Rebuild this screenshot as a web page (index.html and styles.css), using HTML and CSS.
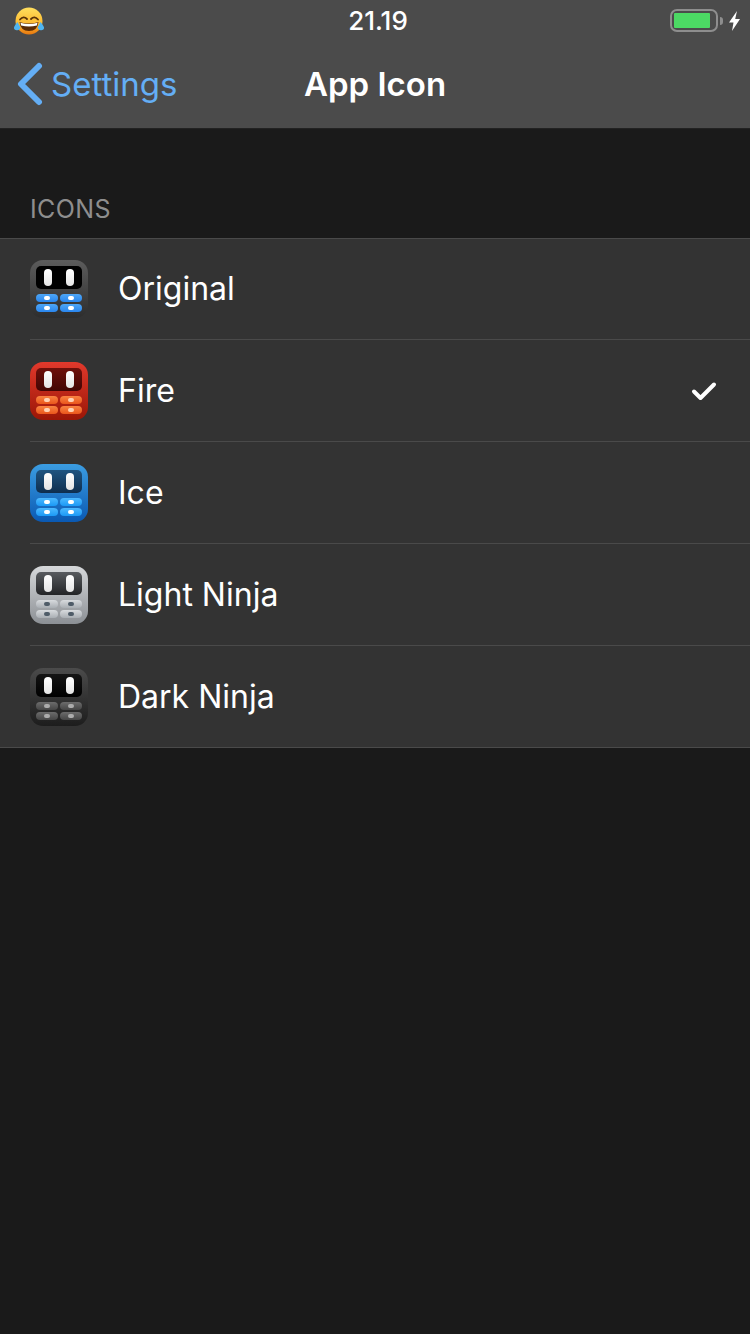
FILE: index.html
```html
<!DOCTYPE html>
<html lang="en">
<head>
  <meta charset="UTF-8" />
  <meta name="viewport" content="width=device-width, initial-scale=1.0" />
  <title>App Icon</title>
  <link rel="stylesheet" href="styles.css">
</head>
<body>
  <header class="topBar">
    <div class="statusBar">
      <svg class="emoji" width="32" height="30" viewBox="0 0 32 30">
        <defs>
          <linearGradient id="emojiFace" x1="0" y1="0" x2="0" y2="1">
            <stop offset="0" stop-color="#ffdf5e" />
            <stop offset="0.6" stop-color="#fdb92f" />
            <stop offset="1" stop-color="#e8780f" />
          </linearGradient>
        </defs>
        <circle cx="16" cy="15" r="13.5" fill="url(#emojiFace)" />
        <path d="M7 13.5q3.5-4 7 -0.5M18 13q3.5-3.500 7 .5" fill="none" stroke="#5a3208" stroke-width="1.800" stroke-linecap="round" />
        <path d="M6.500 16q9.500 3 19 0q-1 9-9.500 9t-9.500-9z" fill="#5b2c06" />
        <path d="M7.500 16.800q8.500 2.400 17 0l-.6 2.600q-7.900 2-15.800 0z" fill="#fff" />
        <path d="M4.500 16q-4 4.500-3.500 6.500t3.300 1.700t3-3z" fill="#4fb4f0" />
        <path d="M27.500 16q4 4.500 3.500 6.500t-3.300 1.700t-3-3z" fill="#4fb4f0" />
      </svg>
      <span class="clock">21.19</span>
      <div class="power">
        <div class="battery"><div class="batteryLevel"></div></div>
        <div class="batteryNub"></div>
        <svg class="bolt" width="11" height="20" viewBox="0 0 11 20">
          <path d="M8 0L0 11.500H4.500L3 20L11 8H6.200z" fill="#fff" />
        </svg>
      </div>
    </div>
    <nav class="navBar">
      <a class="backLink">
        <svg class="chevron" width="26" height="44" viewBox="0 0 26 44">
          <path d="M22 4L4 22L22 40" fill="none" stroke="#64aef5" stroke-width="6" stroke-linecap="round" stroke-linejoin="round" />
        </svg>
        <span>Settings</span>
      </a>
      <h1 class="navTitle">App Icon</h1>
    </nav>
  </header>

  <h2 class="sectionTitle">ICONS</h2>

  <ul class="iconList">
    <li class="iconRow">
      <div class="appIcon original">
        <div class="face"><span class="eye"></span><span class="eye"></span></div>
        <div class="keys">
          <span class="key"></span><span class="key"></span>
          <span class="key"></span><span class="key"></span>
        </div>
      </div>
      <span class="rowLabel">Original</span>
    </li>
    <li class="iconRow">
      <div class="appIcon fire">
        <div class="face"><span class="eye"></span><span class="eye"></span></div>
        <div class="keys">
          <span class="key"></span><span class="key"></span>
          <span class="key"></span><span class="key"></span>
        </div>
      </div>
      <span class="rowLabel">Fire</span>
      <svg class="check" width="26" height="20" viewBox="0 0 26 20">
        <path d="M3 10.500L9.500 17L23 3.500" fill="none" stroke="#fff" stroke-width="4" stroke-linecap="round" stroke-linejoin="round" />
      </svg>
    </li>
    <li class="iconRow">
      <div class="appIcon ice">
        <div class="face"><span class="eye"></span><span class="eye"></span></div>
        <div class="keys">
          <span class="key"></span><span class="key"></span>
          <span class="key"></span><span class="key"></span>
        </div>
      </div>
      <span class="rowLabel">Ice</span>
    </li>
    <li class="iconRow">
      <div class="appIcon light">
        <div class="face"><span class="eye"></span><span class="eye"></span></div>
        <div class="keys">
          <span class="key"></span><span class="key"></span>
          <span class="key"></span><span class="key"></span>
        </div>
      </div>
      <span class="rowLabel">Light Ninja</span>
    </li>
    <li class="iconRow">
      <div class="appIcon dark">
        <div class="face"><span class="eye"></span><span class="eye"></span></div>
        <div class="keys">
          <span class="key"></span><span class="key"></span>
          <span class="key"></span><span class="key"></span>
        </div>
      </div>
      <span class="rowLabel">Dark Ninja</span>
    </li>
  </ul>
</body>
</html>
```

FILE: styles.css
```css
html, body {
  margin: 0;
  padding: 0;
}

body {
  width: 750px;
  min-height: 1334px;
  background-color: #1a1a1a;
  color: #fff;
  font-family: Inter, 'Noto Sans', sans-serif;
}

/* top bar */
.topBar {
  height: 129px;
  box-sizing: border-box;
  background-color: #4b4b4b;
  border-bottom: 1px solid #222;
}

.statusBar {
  height: 40px;
  display: grid;
  grid-template-columns: 1fr auto 1fr;
  align-items: center;
  padding: 0 10px 0 13px;
}

.emoji {
  display: block;
  margin-top: 1px;
}

.clock {
  font-size: 26px;
  font-weight: 500;
  padding-left: 3px;
}

.power {
  display: flex;
  align-items: center;
  justify-content: flex-end;
  margin-top: 1px;
}

.battery {
  width: 48px;
  height: 23px;
  box-sizing: border-box;
  border: 2px solid #8e8e8e;
  border-radius: 7px;
  padding: 2px;
}

.batteryLevel {
  width: 36px;
  height: 15px;
  background-color: #4cd964;
  border-radius: 1px;
}

.batteryNub {
  width: 3px;
  height: 8px;
  margin: 0 6px 0 2px;
  background-color: #8e8e8e;
  border-radius: 0 4px 4px 0;
}

.navBar {
  height: 88px;
  display: grid;
  grid-template-columns: 1fr auto 1fr;
  align-items: center;
}

.backLink {
  display: flex;
  align-items: center;
  gap: 8px;
  padding-left: 17px;
  color: #64aef5;
  font-size: 33px;
}

.chevron {
  display: block;
}

.navTitle {
  margin: 0;
  font-size: 33px;
  font-weight: 600;
}

/* section */
.sectionTitle {
  margin: 0;
  height: 109px;
  box-sizing: border-box;
  padding: 64px 30px 0;
  color: #8e8e8e;
  font-size: 25px;
  font-weight: 400;
  line-height: 32px;
  letter-spacing: 0.4px;
}

.iconList {
  list-style: none;
  margin: 0;
  padding: 0;
  background-color: #333;
  border-top: 1px solid #4a4a4a;
  border-bottom: 1px solid #4a4a4a;
}

.iconRow {
  height: 101px;
  margin-left: 30px;
  padding-right: 33px;
  display: flex;
  align-items: center;
  gap: 30px;
  border-bottom: 1px solid #4a4a4a;
}

.iconRow:first-child {
  height: 100px;
}

.iconRow:first-child .rowLabel {
  margin-bottom: 1px;
}

.iconRow:last-child {
  border-bottom: none;
}

.rowLabel {
  flex: 1;
  font-size: 32px;
}

/* app icons */
.appIcon {
  flex: none;
  width: 58px;
  height: 58px;
  box-sizing: border-box;
  padding: 6px;
  border-radius: 13px;
  background: linear-gradient(var(--body-top), var(--body-bottom));
}

.face {
  height: 23px;
  display: flex;
  justify-content: center;
  align-items: center;
  gap: 14px;
  border-radius: 5px;
  background: linear-gradient(var(--face-top), var(--face-bottom));
}

.eye {
  width: 8px;
  height: 17px;
  border-radius: 4px;
  background: linear-gradient(#fff, #e4e4e4);
}

.keys {
  display: grid;
  grid-template-columns: 22px 22px;
  grid-auto-rows: 8px;
  gap: 2px;
  margin-top: 5px;
}

.key {
  display: flex;
  align-items: center;
  justify-content: center;
  border-radius: 4px;
  background: linear-gradient(var(--key-top), var(--key-bottom));
}

.key::after {
  content: "";
  width: 6px;
  height: 4px;
  border-radius: 2px;
  background-color: var(--key-dot);
}

.original {
  --body-top: #5c5c5c;
  --body-bottom: #2d2d2d;
  --face-top: #000;
  --face-bottom: #000;
  --key-top: #4ea6f6;
  --key-bottom: #2a86ee;
  --key-dot: #fff;
}

.fire {
  --body-top: #e2392c;
  --body-bottom: #9a1606;
  --face-top: #6e100b;
  --face-bottom: #420604;
  --key-top: #f98442;
  --key-bottom: #ea561c;
  --key-dot: #ffd2b4;
}

.ice {
  --body-top: #3b9de2;
  --body-bottom: #0a59b3;
  --face-top: #1f5480;
  --face-bottom: #0f2e4e;
  --key-top: #4cb9ff;
  --key-bottom: #1b99f6;
  --key-dot: #fff;
}

.light {
  --body-top: #d6d8da;
  --body-bottom: #8c9095;
  --face-top: #585b5f;
  --face-bottom: #232426;
  --key-top: #d8dbde;
  --key-bottom: #a9aeb3;
  --key-dot: #4f5c68;
}

.dark {
  --body-top: #4b4b4b;
  --body-bottom: #1d1d1d;
  --face-top: #141414;
  --face-bottom: #000;
  --key-top: #6c6c6c;
  --key-bottom: #454545;
  --key-dot: #acacac;
}
```
